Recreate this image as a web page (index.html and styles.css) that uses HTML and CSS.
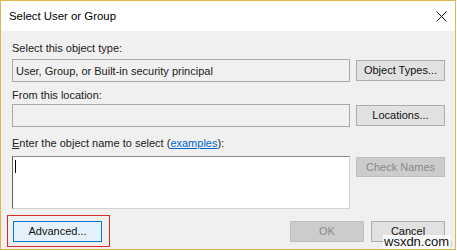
FILE: index.html
```html
<!DOCTYPE html>
<html lang="en">

<head>
  <meta charset="utf-8">
  <link rel="stylesheet" href="styles.css">
</head>

<body>
  <div class="dialog">
    <div class="titlebar">
      <span class="title">Select User or Group</span>
      <svg class="close" width="11" height="11" viewBox="0 0 11 11">
        <path d="M0.5 0.5 L10.5 10.5 M10.5 0.5 L0.5 10.5" stroke="#111" stroke-width="1" fill="none"/>
      </svg>
    </div>
    <div class="content">
      <div class="label label-1">Select this object type:</div>
      <div class="row">
        <div class="field readonly">User, Group, or Built-in security principal</div>
        <button class="btn">Object Types...</button>
      </div>
      <div class="label label-2">From this location:</div>
      <div class="row">
        <div class="field readonly"></div>
        <button class="btn">Locations...</button>
      </div>
      <div class="label label-3"><u>E</u>nter the object name to select (<a href="#" class="link">examples</a>):</div>
      <div class="row row-top">
        <div class="field names"><span class="caret"></span></div>
        <button class="btn disabled">Check Names</button>
      </div>
      <div class="footer">
        <div class="focus-ring">
          <button class="btn default">Advanced...</button>
        </div>
        <div class="actions">
          <button class="btn disabled">OK</button>
          <button class="btn">Cancel</button>
        </div>
      </div>
    </div>
    <svg class="grip" width="6" height="6" viewBox="0 0 6 6">
      <rect x="4" y="0" width="1" height="1" fill="#b8b8b8"/>
      <rect x="2" y="2" width="1" height="1" fill="#b8b8b8"/>
      <rect x="4" y="2" width="1" height="1" fill="#b8b8b8"/>
      <rect x="0" y="4" width="1" height="1" fill="#b8b8b8"/>
      <rect x="2" y="4" width="1" height="1" fill="#b8b8b8"/>
      <rect x="4" y="4" width="1" height="1" fill="#b8b8b8"/>
    </svg>
    <span class="watermark">wsxdn.com</span>
  </div>
</body>

</html>
```

FILE: styles.css
```css
* {
  box-sizing: border-box;
}

html,
body {
  margin: 0;
  background: #fff;
}

body,
button {
  font: 11px/15px "Liberation Sans", Arial, sans-serif;
  color: #000;
}

.dialog {
  position: relative;
  width: 456px;
  height: 250px;
  border: 1px solid #e3b44e;
  background: #f0f0f0;
  display: flex;
  flex-direction: column;
}

/* title */

.titlebar {
  height: 30px;
  flex: none;
  background: #fff;
  display: flex;
  align-items: center;
  justify-content: space-between;
  padding: 0 8px 0 8px;
}

.title {
  font-size: 11.4px;
  margin-top: 1px;
}

.close {
  margin-top: 1px;
}

/* body */

.content {
  flex: 1;
  padding: 0 0 0 11px;
  display: flex;
  flex-direction: column;
}

.label {
  height: 15px;
  color: #222;
}

.label-1 {
  margin: 10px 0 3px;
}

.label-2 {
  margin: 6px 0 1px;
}

.label-3 {
  margin: 9px 0 5px;
}

.row {
  display: flex;
  align-items: center;
  gap: 6px;
}

.row-top {
  align-items: flex-start;
}

.field {
  width: 338px;
  height: 23px;
  border: 1px solid #a8a8a8;
  padding: 4px 3px;
  white-space: nowrap;
  color: #222;
}

.readonly {
  background: #f0f0f0;
}

.names {
  height: 53px;
  background: #fff;
  border-color: #d2d2d2;
  border-top-color: #8a8a8a;
  border-left-color: #666;
  padding: 3px 2px;
}

.caret {
  display: block;
  width: 1px;
  height: 13px;
  background: #000;
}

.link {
  color: #0066cc;
}

/* buttons */

.btn {
  width: 89px;
  height: 21px;
  margin: 0;
  padding: 0;
  border: 1px solid #adadad;
  background: #e1e1e1;
  text-align: center;
  color: #111;
}

.row-top .btn {
  margin-top: 1px;
  height: 20px;
}

.btn.disabled {
  background: #cccccc;
  border-color: #bfbfbf;
  color: #8a8a8a;
}

.btn.default {
  background: #e5f1fb;
  border-color: #0078d7;
}

.footer {
  display: flex;
  justify-content: space-between;
  align-items: flex-start;
  margin-top: 6px;
  width: 433px;
}

.focus-ring {
  border: 1px solid #d42b2b;
  padding: 5px 7px 4px 5px;
  margin-left: -5px;
}

.actions {
  display: flex;
  gap: 7px;
  margin-top: 6px;
}

.actions .btn {
  width: 74px;
}

.grip {
  position: absolute;
  right: 2px;
  bottom: 2px;
}

.watermark {
  position: absolute;
  left: 382px;
  top: 234px;
  font: 13px/14px "Liberation Sans", Arial, sans-serif;
  color: #111;
  background: rgba(255, 255, 255, 0.75);
  padding: 0 1px;
}
```
